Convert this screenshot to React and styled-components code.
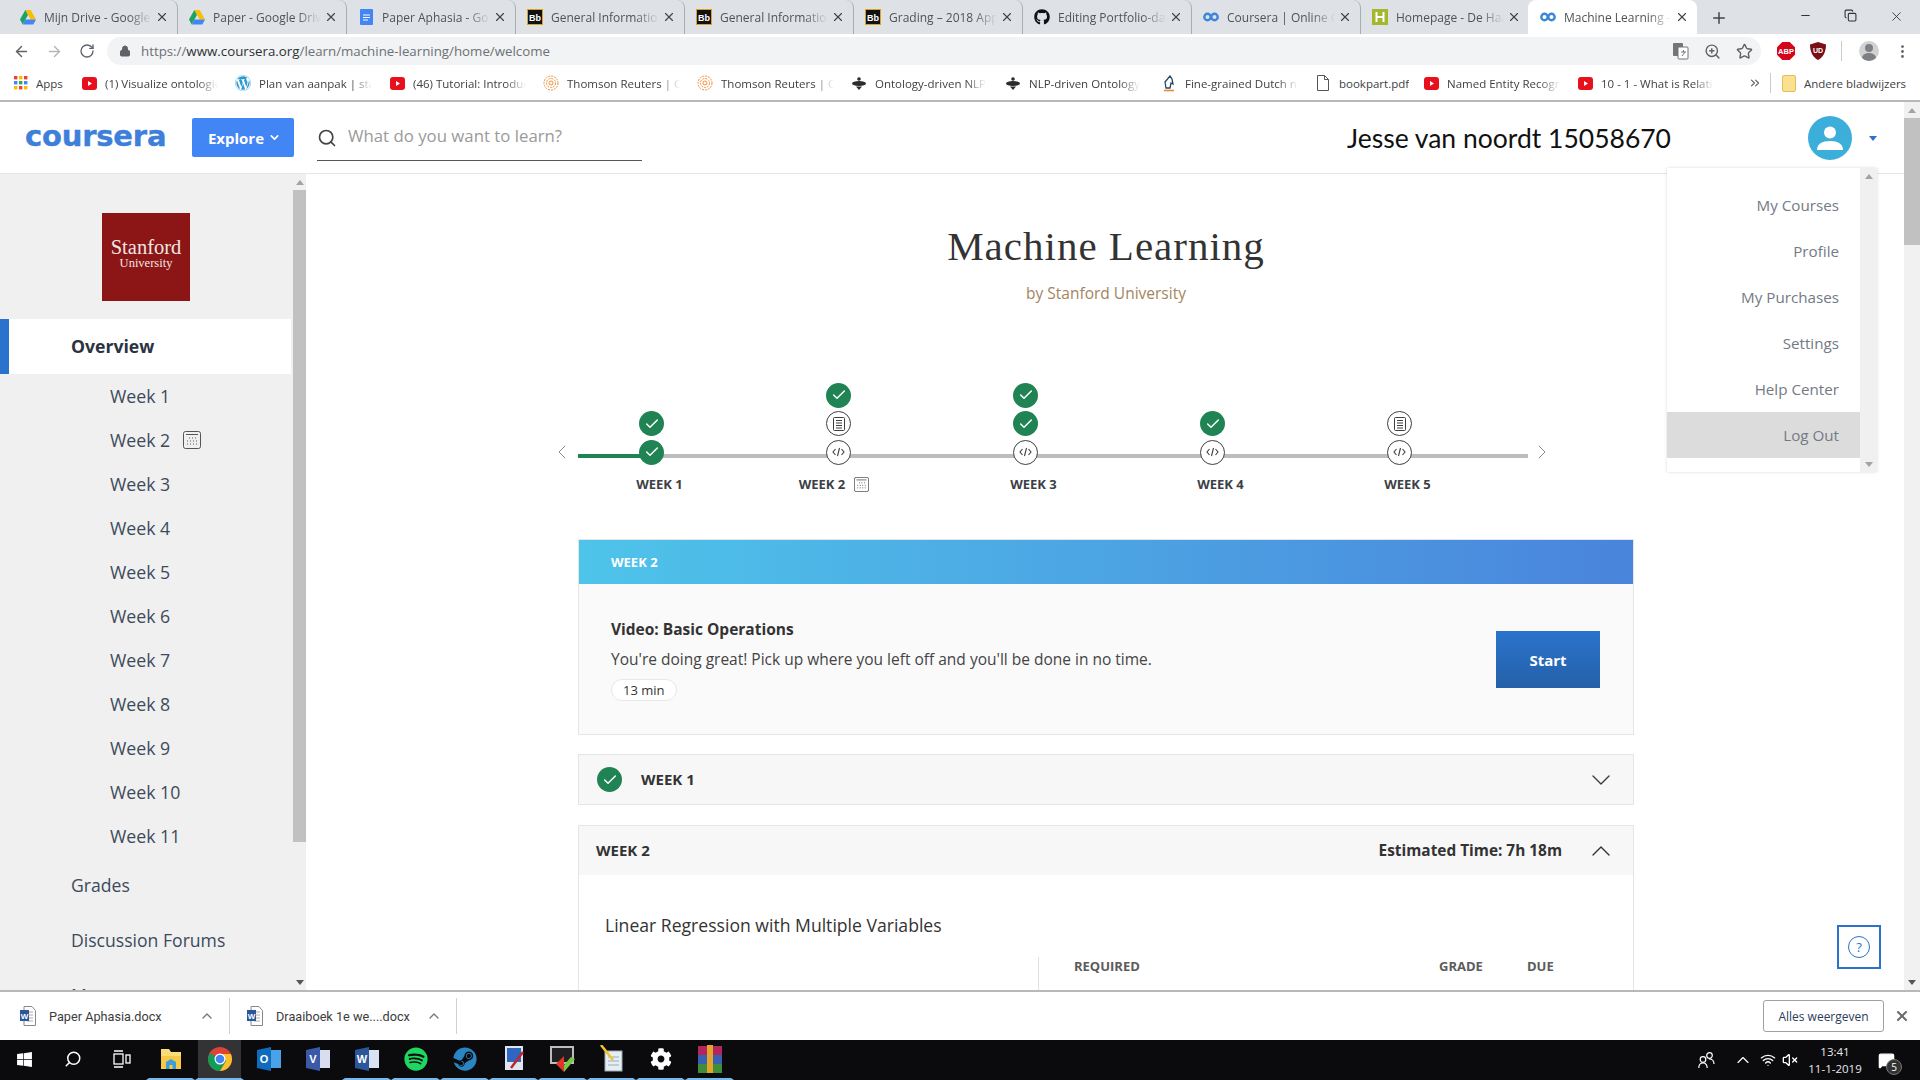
import React from "react";
import styled, { createGlobalStyle } from "styled-components";
import { ArrowLeft, ArrowRight, RotateCw, Lock, Search, Star, ZoomIn, ChevronLeft, ChevronRight, ChevronDown, ChevronUp, X, Plus, Minus, Copy, Check, EllipsisVertical, ChevronsRight, VolumeX, Wifi, MessageSquare } from "lucide-react";
import { FaGithub, FaWordpress, FaSpotify, FaSteam, FaWindows, FaCog } from "react-icons/fa";

const GlobalStyle = createGlobalStyle`
  * {
    box-sizing: border-box;
    padding: 0;
    margin: 0;
  }
  body {
    font-family: "Open Sans", "Liberation Sans", sans-serif;
    background: #fff;
    overflow: hidden;
  }
`

const Screen = styled.div`
  width: 1920px;
  height: 1080px;
  display: flex;
  flex-direction: column;
  overflow: hidden;
`

/* browser chrome */
const TabStrip = styled.div`
  height: 34px;
  flex: none;
  background: #dee1e6;
  display: flex;
  padding-left: 9px;
`
const Tab = styled.div`
  width: 169px;
  height: 34px;
  display: flex;
  align-items: center;
  padding-left: ${p => p.$active ? "12px" : "11px"};
  background: ${p => p.$active ? "#fff" : "transparent"};
  border-radius: 8px 8px 0 0;
  border-right: 1px solid ${p => p.$active || p.$noline ? "transparent" : "#a9acb1"};
  margin-left: ${p => p.$active ? "-2px" : "0"};
`
const TabIcon = styled.span`
  width: 16px;
  height: 16px;
  flex: none;
  display: flex;
  align-items: center;
  justify-content: center;
`
const TabTitle = styled.span`
  width: 108px;
  margin-left: 8px;
  font-size: 12px;
  color: #4f5357;
  white-space: nowrap;
  overflow: hidden;
  -webkit-mask-image: linear-gradient(to right, #000 78%, transparent);
  mask-image: linear-gradient(to right, #000 78%, transparent);
`
const TabClose = styled(X)`
  margin-left: 3px;
  flex: none;
  color: #444;
`
const NewTab = styled(Plus)`
  margin: 9px 0 0 13px;
  color: #444;
`
const WindowButtons = styled.div`
  margin-left: auto;
  display: flex;
  align-items: flex-start;
  gap: 32px;
  padding: 9px 16px 0 0;
  color: #333;
`
const Toolbar = styled.div`
  height: 34px;
  flex: none;
  display: flex;
  align-items: center;
  padding-left: 13px;
  color: #5f6368;
`
const NavIcons = styled.div`
  display: flex;
  gap: 16px;
  margin-right: 12px;
`
const NavIcon = styled.span`
  display: flex;
  color: ${p => p.$dim ? "#b4b6b9" : "#5f6368"};
`
const UrlBar = styled.div`
  width: 1654px;
  height: 28px;
  border-radius: 14px;
  background: #f1f3f4;
  display: flex;
  align-items: center;
  padding: 0 8px 0 12px;
`
const Url = styled.span`
  margin-left: 10px;
  font-size: 13.3px;
  color: #6d7175;
  b {
    font-weight: 400;
    color: #2f3235;
  }
`
const UrlActions = styled.div`
  margin-left: auto;
  display: flex;
  align-items: center;
  gap: 15px;
  color: #5f6368;
`
const Extensions = styled.div`
  display: flex;
  align-items: center;
  margin-left: 16px;
  gap: 15px;
`
const Divider = styled.span`
  width: 1px;
  height: 20px;
  background: #c8cacc;
`
const Profile = styled.span`
  width: 20px;
  height: 20px;
  border-radius: 50%;
  background: #d0d2d4;
  display: block;
  position: relative;
  margin-left: 2px;
  overflow: hidden;
  &::before {
    content: "";
    position: absolute;
    left: 6px;
    top: 3px;
    width: 8px;
    height: 8px;
    border-radius: 50%;
    background: #7d7f82;
  }
  &::after {
    content: "";
    position: absolute;
    left: 3px;
    top: 12px;
    width: 14px;
    height: 10px;
    border-radius: 50%;
    background: #7d7f82;
  }
`
const BookmarkBar = styled.div`
  height: 34px;
  flex: none;
  border-bottom: 2px solid #b8b8b8;
  display: flex;
  align-items: center;
  padding: 0 0 2px 14px;
`
const Bookmark = styled.div`
  width: ${p => p.$w || 154}px;
  display: flex;
  align-items: center;
  flex: none;
`
const BookmarkIcon = styled.span`
  width: 16px;
  height: 16px;
  flex: none;
  display: flex;
  align-items: center;
  justify-content: center;
`
const BookmarkText = styled.span`
  margin-left: ${p => p.$flush ? 0 : 8}px;
  max-width: 113px;
  font-size: 11.5px;
  color: #3d3f42;
  white-space: nowrap;
  overflow: hidden;
  ${p => p.$fade && `
    -webkit-mask-image: linear-gradient(to right, #000 82%, transparent);
    mask-image: linear-gradient(to right, #000 82%, transparent);
  `}
`
const BookmarkEnd = styled.div`
  margin-left: 17px;
  display: flex;
  align-items: center;
  color: #5f6368;
  gap: 8px;
`
const FolderIcon = styled.span`
  width: 14px;
  height: 17px;
  background: #fbe08f;
  border: 1px solid #e3bf5c;
  border-radius: 2px;
  margin-left: 3px;
`

/* page */
const Viewport = styled.div`
  flex: 1;
  min-height: 0;
  display: flex;
`
const Page = styled.div`
  flex: 1;
  min-width: 0;
  display: flex;
  flex-direction: column;
  position: relative;
`
const ScrollTrack = styled.div`
  width: ${p => p.$w}px;
  flex: none;
  background: ${p => p.$bg || "#f1f1f1"};
  display: flex;
  flex-direction: column;
  align-items: stretch;
`
const ScrollArrow = styled.div`
  height: 16px;
  flex: none;
  display: flex;
  align-items: center;
  justify-content: center;
  &::before {
    content: "";
    border-left: 4px solid transparent;
    border-right: 4px solid transparent;
    ${p => p.$down ? `border-top: 5px solid ${p.$light ? "#a3a3a3" : "#555"};` : "border-bottom: 5px solid #a3a3a3;"}
  }
`
const ScrollThumb = styled.div`
  height: ${p => p.$h}px;
  flex: none;
  background: #c1c1c1;
`
const ScrollGap = styled.div`
  flex: 1;
`
const Header = styled.header`
  height: 72px;
  flex: none;
  border-bottom: 1px solid #e5e5e5;
  display: flex;
  align-items: center;
  padding-left: 25px;
`
const Logo = styled.span`
  width: 142px;
  font-family: "DejaVu Sans", sans-serif;
  font-size: 29px;
  font-weight: 700;
  letter-spacing: -0.2px;
  color: #3d7fd9;
  -webkit-text-stroke: 0.4px #3d7fd9;
  line-height: 1;
  margin-top: -3px;
  white-space: nowrap;
`
const Explore = styled.button`
  width: 102px;
  height: 39px;
  margin-left: 25px;
  border: 0;
  border-radius: 2px;
  background: #4285f4;
  color: #fff;
  font-family: "Open Sans", sans-serif;
  font-size: 15px;
  font-weight: 700;
  display: flex;
  align-items: center;
  justify-content: center;
  gap: 4px;
  padding-left: 3px;
`
const SearchField = styled.div`
  width: 325px;
  height: 41px;
  margin: 18px 0 0 23px;
  border-bottom: 1px solid #555;
  display: flex;
  align-items: center;
  color: #444;
  padding-bottom: 4px;
  align-self: flex-start;
`
const SearchText = styled.span`
  margin-left: 11px;
  font-size: 16.8px;
  color: #9a9a9a;
  position: relative;
  top: -3px;
`
const UserName = styled.span`
  margin-left: auto;
  font-family: "Lato", "Open Sans", sans-serif;
  font-size: 26.5px;
  color: #111;
`
const Avatar = styled.span`
  width: 44px;
  height: 44px;
  margin-left: 137px;
  border-radius: 50%;
  background: #3bafda;
  display: flex;
  align-items: center;
  justify-content: center;
`
const Caret = styled.span`
  margin: 2px 27px 0 17px;
  border-left: 4px solid transparent;
  border-right: 4px solid transparent;
  border-top: 5px solid #2a73cc;
`
const Body = styled.div`
  flex: 1;
  min-height: 0;
  display: flex;
`
const Sidebar = styled.aside`
  width: 306px;
  flex: none;
  background: #f0f0f0;
  display: flex;
  overflow: hidden;
`
const SideNav = styled.nav`
  flex: 1;
  min-width: 0;
  padding-top: 39px;
`
const Seal = styled.div`
  width: 88px;
  height: 88px;
  margin: 0 0 18px 102px;
  background: #8c1515;
  color: #f1e6e6;
  font-family: "Liberation Serif", serif;
  text-align: center;
  display: flex;
  flex-direction: column;
  justify-content: center;
  padding-bottom: 7px;
`
const SealName = styled.span`
  font-size: 20.5px;
  line-height: 19px;
`
const SealSub = styled.span`
  font-size: 12.5px;
  line-height: 12px;
`
const OverviewItem = styled.div`
  width: 291px;
  height: 55px;
  background: #fff;
  border-left: 9px solid #2a73cc;
  display: flex;
  align-items: center;
  padding: 0 0 2px 62px;
  font-size: 17.6px;
  font-weight: 700;
  color: #2b3340;
`
const WeekItem = styled.div`
  height: 44px;
  padding-left: 110px;
  display: flex;
  align-items: center;
  gap: 13px;
  font-size: 17.7px;
  color: #3d4a5c;
`
const SideItem = styled.div`
  height: 55px;
  padding: 0 0 2px 71px;
  display: flex;
  align-items: center;
  font-size: 17.6px;
  color: #3d4a5c;
`
const Main = styled.main`
  flex: 1;
  min-width: 0;
  padding-left: 272px;
  overflow: hidden;
  background: #fff;
`
const Content = styled.div`
  width: 1056px;
`
const Title = styled.h1`
  margin-top: 48px;
  text-align: center;
  font-family: "Liberation Serif", serif;
  font-size: 41px;
  letter-spacing: 1px;
  line-height: 48px;
  font-weight: 400;
  color: #333;
`
const Byline = styled.p`
  margin-top: 13px;
  text-align: center;
  font-size: 15.5px;
  line-height: 20px;
  color: #a5845e;
`
const Timeline = styled.div`
  position: relative;
  margin: 75.5px 0 45px -12px;
  width: 935px;
  display: grid;
  grid-template-columns: repeat(5, 187px);
`
const TrackLine = styled.div`
  position: absolute;
  left: 12px;
  top: 75px;
  width: 950px;
  height: 4px;
  background: linear-gradient(to right, #1f8354 8%, #bdbdbd 8%);
`
const TimelineArrow = styled.span`
  position: absolute;
  top: 61px;
  ${p => p.$side}: ${p => p.$off}px;
  color: #8a8a8a;
  display: flex;
`
const WeekColumn = styled.div`
  position: relative;
  display: flex;
  flex-direction: column;
  align-items: center;
`
const NodeStack = styled.div`
  height: 86px;
  display: flex;
  flex-direction: column;
  justify-content: flex-end;
  align-items: center;
  gap: 3.5px;
  margin-right: 16px;
`
const Node = styled.span`
  width: 25px;
  height: 25px;
  border-radius: 50%;
  flex: none;
  display: flex;
  align-items: center;
  justify-content: center;
  background: ${p => p.$done ? "#1f8354" : "#fff"};
  border: ${p => p.$done ? "0" : "1.5px solid #3f3f3f"};
  color: ${p => p.$done ? "#fff" : "#3f3f3f"};
`
const WeekLabel = styled.div`
  margin-top: 9.5px;
  height: 20px;
  display: flex;
  align-items: center;
  gap: 9px;
  font-size: 13px;
  font-weight: 700;
  color: #3c4045;
  margin-right: ${p => p.$shift || 0}px;
`
const NextCard = styled.section`
  border: 1px solid #e5e5e5;
  background: #fafafa;
  height: 196px;
`
const Banner = styled.div`
  height: 44px;
  background: linear-gradient(to right, #4ec4ea, #4a84dc);
  display: flex;
  align-items: center;
  padding-left: 32px;
  color: #fff;
  font-size: 13px;
  font-weight: 700;
`
const NextBody = styled.div`
  display: flex;
  justify-content: space-between;
  padding: 33px 33px 0 32px;
`
const NextTitle = styled.div`
  font-size: 15.5px;
  line-height: 24px;
  font-weight: 700;
  color: #333;
`
const NextText = styled.div`
  margin-top: 6px;
  font-size: 15.5px;
  line-height: 24px;
  color: #444;
`
const Pill = styled.span`
  display: inline-block;
  margin-top: 8px;
  height: 22px;
  padding: 0 11px;
  border: 1px solid #e8e8e8;
  border-radius: 11px;
  background: #fff;
  font-size: 13px;
  line-height: 21px;
  color: #333;
`
const StartButton = styled.button`
  width: 104px;
  height: 57px;
  margin-top: 14px;
  border: 0;
  background: linear-gradient(#2a73cc, #2560a8);
  color: #fff;
  font-family: "Open Sans", sans-serif;
  font-size: 15px;
  font-weight: 700;
`
const WeekRow = styled.div`
  margin-top: 19px;
  height: 51px;
  border: 1px solid #e5e5e5;
  background: #f7f7f7;
  display: flex;
  align-items: center;
  padding: 0 16px 0 18px;
  font-size: 15px;
  font-weight: 700;
  color: #333;
  gap: 19px;
`
const RowLabel = styled.span`
  margin-top: -2px;
`
const RowChevron = styled.span`
  margin-left: auto;
  display: flex;
  color: #3c3c3c;
`
const WeekPanel = styled.section`
  margin-top: 20px;
  border: 1px solid #e5e5e5;
  border-bottom: 0;
  height: 400px;
  background: #fff;
`
const PanelHead = styled.div`
  height: 49px;
  background: #f7f7f7;
  display: flex;
  align-items: center;
  padding: 0 16px 0 17px;
  font-size: 15px;
  font-weight: 700;
  color: #333;
`
const Estimate = styled.span`
  margin-left: auto;
  margin-right: 23px;
  font-size: 15.4px;
`
const SectionName = styled.h2`
  margin: 37px 0 0 26px;
  font-size: 17.6px;
  line-height: 26px;
  font-weight: 400;
  color: #333;
`
const TableHead = styled.div`
  margin: 19px 0 0 459px;
  height: 60px;
  border-left: 1px solid #e0e0e0;
  padding-left: 35px;
  display: flex;
  font-size: 13px;
  line-height: 18px;
  font-weight: 700;
  color: #5c5c5c;
`
const TableCol = styled.span`
  width: ${p => p.$w}px;
`
const Dropdown = styled.div`
  position: absolute;
  left: 1667px;
  top: 66px;
  width: 210px;
  height: 304px;
  background: #fff;
  box-shadow: 0 0 3px rgba(0, 0, 0, 0.15);
  display: flex;
`
const MenuList = styled.div`
  flex: 1;
  padding-top: 14px;
`
const MenuItem = styled.div`
  height: 46px;
  padding-right: 21px;
  display: flex;
  align-items: center;
  justify-content: flex-end;
  font-size: 15.2px;
  color: #737a85;
  background: ${p => p.$on ? "#dcdcdc" : "transparent"};
`
const HelpButton = styled.div`
  position: absolute;
  left: 1837px;
  top: 823px;
  width: 44px;
  height: 44px;
  background: #fff;
  border: 2px solid #2a73cc;
  display: flex;
  align-items: center;
  justify-content: center;
`
const HelpMark = styled.span`
  width: 22px;
  height: 22px;
  border: 1px solid #2a73cc;
  border-radius: 50%;
  font-size: 13px;
  line-height: 20px;
  text-align: center;
  color: #2a73cc;
`

/* download shelf and taskbar */
const DownloadBar = styled.div`
  height: 50px;
  flex: none;
  border-top: 2px solid #b8b8b8;
  display: flex;
  align-items: center;
  background: #fff;
`
const Download = styled.div`
  width: ${p => p.$w}px;
  height: 36px;
  display: flex;
  align-items: center;
  padding-left: ${p => p.$pad}px;
  border-right: 1px solid #d0d0d0;
  font-family: "Roboto", sans-serif;
  font-size: 12.7px;
  color: #3c3c3c;
`
const DownloadName = styled.span`
  margin-left: 13px;
  width: 150px;
  white-space: nowrap;
`
const DownloadChevron = styled(ChevronUp)`
  color: #777;
`
const ShowAll = styled.button`
  margin-left: auto;
  width: 121px;
  height: 32px;
  border: 1px solid #a0a0a0;
  border-radius: 3px;
  background: #fff;
  font-family: "Open Sans", sans-serif;
  font-size: 12px;
  color: #2b3b5c;
`
const ShelfClose = styled(X)`
  margin: 0 10px 0 10px;
  color: #6b6b6b;
`
const Taskbar = styled.div`
  height: 40px;
  flex: none;
  background: #0b0b0e;
  display: flex;
  align-items: stretch;
  color: #fff;
`
const TaskSlot = styled.div`
  width: ${p => p.$w || 49}px;
  display: flex;
  align-items: center;
  justify-content: center;
  flex: none;
  background: ${p => p.$on ? "#333336" : "transparent"};
  border-bottom: 2px solid ${p => p.$open ? "#76b9ed" : "transparent"};
  border-left: ${p => p.$open ? "3px solid #0b0b0e" : "0"};
  border-right: ${p => p.$open ? "3px solid #0b0b0e" : "0"};
`
const FlippedSearch = styled(Search)`
  transform: scaleX(-1);
`
const Tray = styled.div`
  margin-left: auto;
  display: flex;
  align-items: center;
  padding-right: 25px;
`
const TrayIcon = styled.span`
  display: flex;
  margin-right: ${p => p.$gap}px;
`
const Clock = styled.div`
  width: 66px;
  text-align: center;
  font-family: "Open Sans", sans-serif;
  font-size: 11.5px;
  line-height: 17px;
  color: #e8e8e8;
  margin-right: 10px;
`
const NoticeBadge = styled.span`
  position: relative;
  display: flex;
`
const NoticeCount = styled.span`
  position: absolute;
  right: -7px;
  bottom: -6px;
  width: 16px;
  height: 16px;
  border-radius: 50%;
  background: #333;
  border: 1px solid #777;
  font-size: 10px;
  line-height: 14px;
  text-align: center;
  color: #fff;
`

/* small drawings */
const Drive = () => (
  <svg width="16" height="15" viewBox="0 0 16 15">
    <path d="M5.3 0h5.4l5.3 9.5h-5.3z" fill="#fbbc04" />
    <path d="M5.3 0L0 9.5 2.7 14.5 8 5z" fill="#1ea362" />
    <path d="M2.7 14.5h10.6L16 9.5H5.3z" fill="#4285f4" />
  </svg>
)
const Docs = () => (
  <svg width="13" height="16" viewBox="0 0 13 16">
    <rect width="13" height="16" rx="1" fill="#4285f4" />
    <path d="M3 6h7M3 8.5h7M3 11h5" stroke="#fff" />
  </svg>
)
const Blackboard = () => (
  <svg width="16" height="16" viewBox="0 0 16 16">
    <rect x="0.5" y="0.5" width="15" height="15" fill="#111" stroke="#d9a227" />
    <text x="8" y="11.5" textAnchor="middle" fontSize="9" fontWeight="700" fontFamily="Liberation Sans" fill="#fff">Bb</text>
  </svg>
)
const CourseraMark = () => (
  <svg width="16" height="10" viewBox="0 0 16 10" fill="none" stroke="#3d85d8" strokeWidth="2.4">
    <circle cx="4.5" cy="5" r="3.2" />
    <circle cx="11.5" cy="5" r="3.2" />
  </svg>
)
const HMark = () => (
  <svg width="16" height="16" viewBox="0 0 16 16">
    <rect width="16" height="16" fill="#a5b82d" />
    <path d="M4.5 3v10M11.5 3v10M4.5 8h7" stroke="#fff" strokeWidth="2" />
  </svg>
)
const YouTube = () => (
  <svg width="15" height="13" viewBox="0 0 15 13">
    <rect width="15" height="13" rx="3" fill="#e8101c" />
    <path d="M6 4l4 2.5L6 9z" fill="#fff" />
  </svg>
)
const AppsGrid = () => (
  <svg width="14" height="14" viewBox="0 0 14 14">
    {[0, 5, 10].map((y, r) => [0, 5, 10].map((x, c) => (
      <rect key={`${r}-${c}`} x={x} y={y} width="3.4" height="3.4" fill={["#ea4335", "#4285f4", "#fbbc04", "#34a853"][(r + c * 2) % 4]} />
    )))}
  </svg>
)
const Reuters = () => (
  <svg width="16" height="16" viewBox="0 0 16 16" fill="none" stroke="#f0903a">
    <circle cx="8" cy="8" r="7" strokeDasharray="2 1" />
    <circle cx="8" cy="8" r="4.5" strokeDasharray="2 1" />
    <circle cx="8" cy="8" r="2" />
  </svg>
)
const Hive = () => (
  <svg width="14" height="13" viewBox="0 0 14 13" fill="#2b2b2b">
    <ellipse cx="7" cy="6.5" rx="7" ry="2.6" />
    <circle cx="7" cy="2" r="1.8" />
    <path d="M4 9.5h6l-3 3.5z" />
  </svg>
)
const Knight = () => (
  <svg width="14" height="17" viewBox="0 0 14 17" fill="none">
    <path d="M4 13L3 7l5-6 2 3 1 5-2-1-1 5z" stroke="#24466e" strokeWidth="1.3" />
    <path d="M2 15.5h10" stroke="#e98a2c" strokeWidth="1.6" />
  </svg>
)
const Translate = () => (
  <svg width="16" height="17" viewBox="0 0 16 17">
    <rect width="10" height="13" rx="1" fill="#757575" />
    <rect x="5" y="4" width="10" height="12" rx="1" fill="#fff" stroke="#757575" />
    <path d="M8 9h5M10.5 7v2M9 13l3-4" stroke="#757575" />
  </svg>
)
const Abp = () => (
  <svg width="18" height="18" viewBox="0 0 18 18">
    <path d="M5.3 0h7.4L18 5.3v7.4L12.7 18H5.3L0 12.7V5.3z" fill="#d3061c" />
    <text x="9" y="12" textAnchor="middle" fontSize="7.5" fontWeight="700" fontFamily="Liberation Sans" fill="#fff">ABP</text>
  </svg>
)
const UBlock = () => (
  <svg width="16" height="18" viewBox="0 0 16 18">
    <path d="M8 0l8 2.5C16 10 13 15.5 8 18 3 15.5 0 10 0 2.5z" fill="#7a0f16" />
    <text x="8" y="11" textAnchor="middle" fontSize="7" fontWeight="700" fontFamily="Liberation Sans" fill="#fff">UD</text>
  </svg>
)
const PageIcon = () => (
  <svg width="12" height="16" viewBox="0 0 12 16" fill="#fff" stroke="#555">
    <path d="M.5.5h7l4 4v11H.5z" />
    <path d="M7.5.5v4h4" fill="none" />
  </svg>
)
const CodeGlyph = () => (
  <svg width="13" height="10" viewBox="0 0 13 10" fill="none" stroke="currentColor" strokeWidth="1.1">
    <path d="M3.5 2L1 5l2.5 3M9.5 2L12 5 9.5 8M7.5 1L5.5 9" />
  </svg>
)
const ReadingGlyph = () => (
  <svg width="12" height="14" viewBox="0 0 12 14" fill="none" stroke="currentColor">
    <rect x=".5" y=".5" width="11" height="13" rx="1" />
    <path d="M3 3.5h6M3 6h6M3 8.5h6M3 11h6" />
  </svg>
)
const Calendar = ({ size = 18 }) => (
  <svg width={size} height={size} viewBox="0 0 18 18" fill="none" stroke="#555">
    <rect x=".5" y=".5" width="17" height="17" rx="2" />
    <path d="M3 3.5h12" />
    <path d="M6 7h1M9 7h1M12 7h1M4 10h1M7 10h1M10 10h1M13 10h1M4 13h1M7 13h1M10 13h1M13 13h1" strokeWidth="1.2" />
  </svg>
)
const PersonGlyph = () => (
  <svg width="26" height="26" viewBox="0 0 26 26" fill="#fff">
    <circle cx="13" cy="7.5" r="6" />
    <path d="M0 25c0-6 5-9 13-9s13 3 13 9z" />
  </svg>
)
const WordDoc = () => (
  <svg width="16" height="20" viewBox="0 0 16 20" fill="none">
    <path d="M4 .5h8l3.5 4v15H4z" fill="#fff" stroke="#888" />
    <path d="M7 6h6M7 9h6M7 12h6M7 15h6" stroke="#aaa" />
    <rect x="0" y="4" width="9" height="11" fill="#2b579a" />
    <text x="4.5" y="12.5" textAnchor="middle" fontSize="8" fontWeight="700" fontFamily="Liberation Sans" fill="#fff">W</text>
  </svg>
)
const TaskView = () => (
  <svg width="18" height="18" viewBox="0 0 18 18" fill="none" stroke="#fff" strokeWidth="1.3">
    <path d="M1 1h9M1 17h9" />
    <rect x="1" y="4" width="9" height="10" />
    <rect x="13" y="5" width="4" height="8" />
  </svg>
)
const PeopleIcon = () => (
  <svg width="17" height="17" viewBox="0 0 17 17" fill="none" stroke="#fff" strokeWidth="1.2">
    <circle cx="11.5" cy="3.5" r="2.8" />
    <circle cx="5" cy="7.5" r="2.8" />
    <path d="M.8 16c0-3 1.5-5 4.2-5s4.2 2 4.2 5M11 7c3 0 5 2 5 5" />
  </svg>
)
const ExplorerIcon = () => (
  <svg width="24" height="24" viewBox="0 0 24 24">
    <path d="M2 2h8l2 3h10v17H2z" fill="#fcdc78" />
    <rect x="2" y="9" width="20" height="13" fill="#f7c948" />
    <path d="M7 22v-7l5-3 5 3v7h-3.5v-4h-3v4z" fill="#3aa0dc" />
  </svg>
)
const ChromeIcon = () => (
  <svg width="24" height="24" viewBox="0 0 24 24">
    <circle cx="12" cy="12" r="12" fill="#db4437" />
    <path d="M12 12L1.6 6 0 12a12 12 0 0 0 12 12l6-10z" fill="#0f9d58" />
    <path d="M12 7h10.9A12 12 0 0 1 12 24l6-10z" fill="#fbc02d" />
    <circle cx="12" cy="12" r="5.5" fill="#fff" />
    <circle cx="12" cy="12" r="4.3" fill="#4285f4" />
  </svg>
)
const SquareApp = ({ bg, letter, accent }) => (
  <svg width="24" height="24" viewBox="0 0 24 24">
    <rect x="8" y="3" width="16" height="18" fill={accent} />
    <path d="M0 3l14-3v24L0 21z" fill={bg} />
    <text x="7" y="16" textAnchor="middle" fontSize="11" fontWeight="700" fontFamily="Liberation Sans" fill="#fff">{letter}</text>
  </svg>
)
const PuttyIcon = () => (
  <svg width="22" height="26" viewBox="0 0 22 26">
    <rect x="2" y="0" width="18" height="24" fill="#dfe6f2" />
    <rect x="4" y="2" width="14" height="14" fill="#2f66c2" />
    <path d="M20 6L8 22" stroke="#c0272d" strokeWidth="2.5" />
  </svg>
)
const ConsoleIcon = () => (
  <svg width="26" height="26" viewBox="0 0 26 26">
    <rect x="0" y="0" width="24" height="18" fill="#bdbdbd" />
    <rect x="2" y="2" width="20" height="14" fill="#1f1f1f" />
    <path d="M14 10l-8 8 8 8z" fill="#e0352b" />
    <path d="M14 26l11-13-4-2-7 8z" fill="#7ac943" />
  </svg>
)
const NotepadIcon = () => (
  <svg width="24" height="28" viewBox="0 0 24 28">
    <rect x="5" y="6" width="17" height="20" fill="#e6eef5" stroke="#9aa" />
    <path d="M8 12h11M8 16h11M8 20h11" stroke="#9ab" />
    <path d="M1 0l12 15" stroke="#f2c230" strokeWidth="2.5" />
  </svg>
)
const RarIcon = () => (
  <svg width="24" height="28" viewBox="0 0 24 28">
    <rect x="0" y="1" width="24" height="9" fill="#b2265c" />
    <rect x="0" y="10" width="24" height="9" fill="#3a5fb5" />
    <rect x="0" y="19" width="24" height="9" fill="#3f8f3a" />
    <rect x="9" y="0" width="6" height="28" fill="#e3a52a" />
  </svg>
)

const tabs = [
  [<Drive />, "Mijn Drive - Google Drive"],
  [<Drive />, "Paper - Google Drive"],
  [<Docs />, "Paper Aphasia - Google Docs"],
  [<Blackboard />, "General Information - Blackboard"],
  [<Blackboard />, "General Information - Blackboard"],
  [<Blackboard />, "Grading – 2018 Applied"],
  [<FaGithub size={16} color="#111" />, "Editing Portfolio-data"],
  [<CourseraMark />, "Coursera | Online Courses"],
  [<HMark />, "Homepage - De Haagse"],
  [<CourseraMark />, "Machine Learning - Home"],
]

const bookmarks = [
  [<YouTube />, "(1) Visualize ontologies in", 154],
  [<FaWordpress size={16} color="#2a9ad0" />, "Plan van aanpak | stage", 154],
  [<YouTube />, "(46) Tutorial: Introduction", 154],
  [<Reuters />, "Thomson Reuters | Open", 154],
  [<Reuters />, "Thomson Reuters | Open", 154],
  [<Hive />, "Ontology-driven NLP", 154],
  [<Hive />, "NLP-driven Ontology", 156],
  [<Knight />, "Fine-grained Dutch named", 154],
  [<PageIcon />, "bookpart.pdf", 108],
  [<YouTube />, "Named Entity Recognition", 154],
  [<YouTube />, "10 - 1 - What is Relation", 154],
]

const weekColumns = [
  { label: "WEEK 1", nodes: ["done", "done"] },
  { label: "WEEK 2", nodes: ["done", "read", "code"], calendar: true },
  { label: "WEEK 3", nodes: ["done", "done", "code"] },
  { label: "WEEK 4", nodes: ["done", "code"] },
  { label: "WEEK 5", nodes: ["read", "code"] },
]

const TimelineNode = ({ kind }) => (
  <Node $done={kind === "done"}>
    {kind === "done" && <Check size={16} strokeWidth={2.2} />}
    {kind === "read" && <ReadingGlyph />}
    {kind === "code" && <CodeGlyph />}
  </Node>
)

const App = () => {
  return (
    <Screen>
      <GlobalStyle />

      <TabStrip>
        {tabs.map(([icon, title], i) => (
          <Tab key={i} $active={i === 9} $noline={i === 8}>
            <TabIcon>{icon}</TabIcon>
            <TabTitle>{title}</TabTitle>
            <TabClose size={14} />
          </Tab>
        ))}
        <NewTab size={18} />
        <WindowButtons>
          <Minus size={13} />
          <Copy size={13} />
          <X size={15} strokeWidth={1.4} />
        </WindowButtons>
      </TabStrip>

      <Toolbar>
        <NavIcons>
          <NavIcon><ArrowLeft size={17} /></NavIcon>
          <NavIcon $dim><ArrowRight size={17} /></NavIcon>
          <NavIcon><RotateCw size={16} /></NavIcon>
        </NavIcons>
        <UrlBar>
          <Lock size={12} fill="#5f6368" />
          <Url>https://<b>www.coursera.org</b>/learn/machine-learning/home/welcome</Url>
          <UrlActions>
            <Translate />
            <ZoomIn size={17} />
            <Star size={17} />
          </UrlActions>
        </UrlBar>
        <Extensions>
          <Abp />
          <UBlock />
          <Divider />
          <Profile />
          <EllipsisVertical size={17} />
        </Extensions>
      </Toolbar>

      <BookmarkBar>
        <Bookmark $w={67}>
          <AppsGrid />
          <BookmarkText>Apps</BookmarkText>
        </Bookmark>
        {bookmarks.map(([icon, text, width], i) => (
          <Bookmark key={i} $w={width}>
            <BookmarkIcon>{icon}</BookmarkIcon>
            <BookmarkText $fade={text.length > 14}>{text}</BookmarkText>
          </Bookmark>
        ))}
        <BookmarkEnd>
          <ChevronsRight size={14} />
          <Divider />
          <FolderIcon />
          <BookmarkText $flush>Andere bladwijzers</BookmarkText>
        </BookmarkEnd>
      </BookmarkBar>

      <Viewport>
        <Page>
          <Header>
            <Logo>coursera</Logo>
            <Explore>Explore <ChevronDown size={13} strokeWidth={3} /></Explore>
            <SearchField>
              <Search size={20} />
              <SearchText>What do you want to learn?</SearchText>
            </SearchField>
            <UserName>Jesse van noordt 15058670</UserName>
            <Avatar><PersonGlyph /></Avatar>
            <Caret />
          </Header>

          <Body>
            <Sidebar>
              <SideNav>
                <Seal>
                  <SealName>Stanford</SealName>
                  <SealSub>University</SealSub>
                </Seal>
                <OverviewItem>Overview</OverviewItem>
                {[1, 2, 3, 4, 5, 6, 7, 8, 9, 10, 11].map(n => (
                  <WeekItem key={n}>
                    Week {n}
                    {n === 2 && <Calendar />}
                  </WeekItem>
                ))}
                <SideItem>Grades</SideItem>
                <SideItem>Discussion Forums</SideItem>
                <SideItem>Messages</SideItem>
              </SideNav>
              <ScrollTrack $w={13} $bg="#f0f0f0">
                <ScrollArrow />
                <ScrollThumb $h={652} />
                <ScrollGap />
                <ScrollArrow $down />
              </ScrollTrack>
            </Sidebar>

            <Main>
              <Content>
                <Title>Machine Learning</Title>
                <Byline>by Stanford University</Byline>

                <Timeline>
                  <TrackLine />
                  <TimelineArrow $side="left" $off={-16}><ChevronLeft size={24} strokeWidth={1} /></TimelineArrow>
                  <TimelineArrow $side="right" $off={-53}><ChevronRight size={24} strokeWidth={1} /></TimelineArrow>
                  {weekColumns.map(week => (
                    <WeekColumn key={week.label}>
                      <NodeStack>
                        {week.nodes.map((kind, i) => <TimelineNode key={i} kind={kind} />)}
                      </NodeStack>
                      <WeekLabel $shift={week.calendar ? 25 : 0}>
                        {week.label}
                        {week.calendar && <Calendar size={15} />}
                      </WeekLabel>
                    </WeekColumn>
                  ))}
                </Timeline>

                <NextCard>
                  <Banner>WEEK 2</Banner>
                  <NextBody>
                    <div>
                      <NextTitle>Video: Basic Operations</NextTitle>
                      <NextText>You're doing great! Pick up where you left off and you'll be done in no time.</NextText>
                      <Pill>13 min</Pill>
                    </div>
                    <StartButton>Start</StartButton>
                  </NextBody>
                </NextCard>

                <WeekRow>
                  <Node $done><Check size={16} strokeWidth={2.2} /></Node>
                  <RowLabel>WEEK 1</RowLabel>
                  <RowChevron><ChevronDown size={32} strokeWidth={1} /></RowChevron>
                </WeekRow>

                <WeekPanel>
                  <PanelHead>
                    <RowLabel>WEEK 2</RowLabel>
                    <Estimate><RowLabel>Estimated Time: 7h 18m</RowLabel></Estimate>
                    <ChevronUp size={32} strokeWidth={1} />
                  </PanelHead>
                  <SectionName>Linear Regression with Multiple Variables</SectionName>
                  <TableHead>
                    <TableCol $w={365}>REQUIRED</TableCol>
                    <TableCol $w={88}>GRADE</TableCol>
                    <TableCol $w={40}>DUE</TableCol>
                  </TableHead>
                </WeekPanel>
              </Content>
            </Main>
          </Body>

          <Dropdown>
            <MenuList>
              <MenuItem>My Courses</MenuItem>
              <MenuItem>Profile</MenuItem>
              <MenuItem>My Purchases</MenuItem>
              <MenuItem>Settings</MenuItem>
              <MenuItem>Help Center</MenuItem>
              <MenuItem $on>Log Out</MenuItem>
            </MenuList>
            <ScrollTrack $w={17} $bg="#f0f0f0">
              <ScrollArrow />
              <ScrollGap />
              <ScrollArrow $down $light />
            </ScrollTrack>
          </Dropdown>

          <HelpButton><HelpMark>?</HelpMark></HelpButton>
        </Page>

        <ScrollTrack $w={16}>
          <ScrollArrow />
          <ScrollThumb $h={127} />
          <ScrollGap />
          <ScrollArrow $down />
        </ScrollTrack>
      </Viewport>

      <DownloadBar>
        <Download $w={230} $pad={20}>
          <WordDoc />
          <DownloadName>Paper Aphasia.docx</DownloadName>
          <DownloadChevron size={16} />
        </Download>
        <Download $w={227} $pad={17}>
          <WordDoc />
          <DownloadName>Draaiboek 1e we....docx</DownloadName>
          <DownloadChevron size={16} />
        </Download>
        <ShowAll>Alles weergeven</ShowAll>
        <ShelfClose size={16} strokeWidth={3} />
      </DownloadBar>

      <Taskbar>
        <TaskSlot $w={48}><FaWindows size={17} /></TaskSlot>
        <TaskSlot><FlippedSearch size={18} /></TaskSlot>
        <TaskSlot><TaskView /></TaskSlot>
        <TaskSlot $open><ExplorerIcon /></TaskSlot>
        <TaskSlot $open $on><ChromeIcon /></TaskSlot>
        <TaskSlot><SquareApp bg="#0f6cbd" accent="#4aa3e8" letter="O" /></TaskSlot>
        <TaskSlot><SquareApp bg="#3a5aa8" accent="#d8def0" letter="V" /></TaskSlot>
        <TaskSlot $open><SquareApp bg="#2b579a" accent="#d8e2f2" letter="W" /></TaskSlot>
        <TaskSlot $open><FaSpotify size={24} color="#1ed760" /></TaskSlot>
        <TaskSlot $open><FaSteam size={24} color="#2a86c2" /></TaskSlot>
        <TaskSlot $open><PuttyIcon /></TaskSlot>
        <TaskSlot $open><ConsoleIcon /></TaskSlot>
        <TaskSlot $open><NotepadIcon /></TaskSlot>
        <TaskSlot $open><FaCog size={22} /></TaskSlot>
        <TaskSlot $open><RarIcon /></TaskSlot>
        <Tray>
          <TrayIcon $gap={18}><PeopleIcon /></TrayIcon>
          <TrayIcon $gap={7}><ChevronUp size={20} strokeWidth={1.4} /></TrayIcon>
          <TrayIcon $gap={6}><Wifi size={16} /></TrayIcon>
          <TrayIcon $gap={4}><VolumeX size={16} /></TrayIcon>
          <Clock>13:41<br />11-1-2019</Clock>
          <NoticeBadge>
            <MessageSquare size={17} fill="#fff" />
            <NoticeCount>5</NoticeCount>
          </NoticeBadge>
        </Tray>
      </Taskbar>
    </Screen>
  );
}

export default App;
